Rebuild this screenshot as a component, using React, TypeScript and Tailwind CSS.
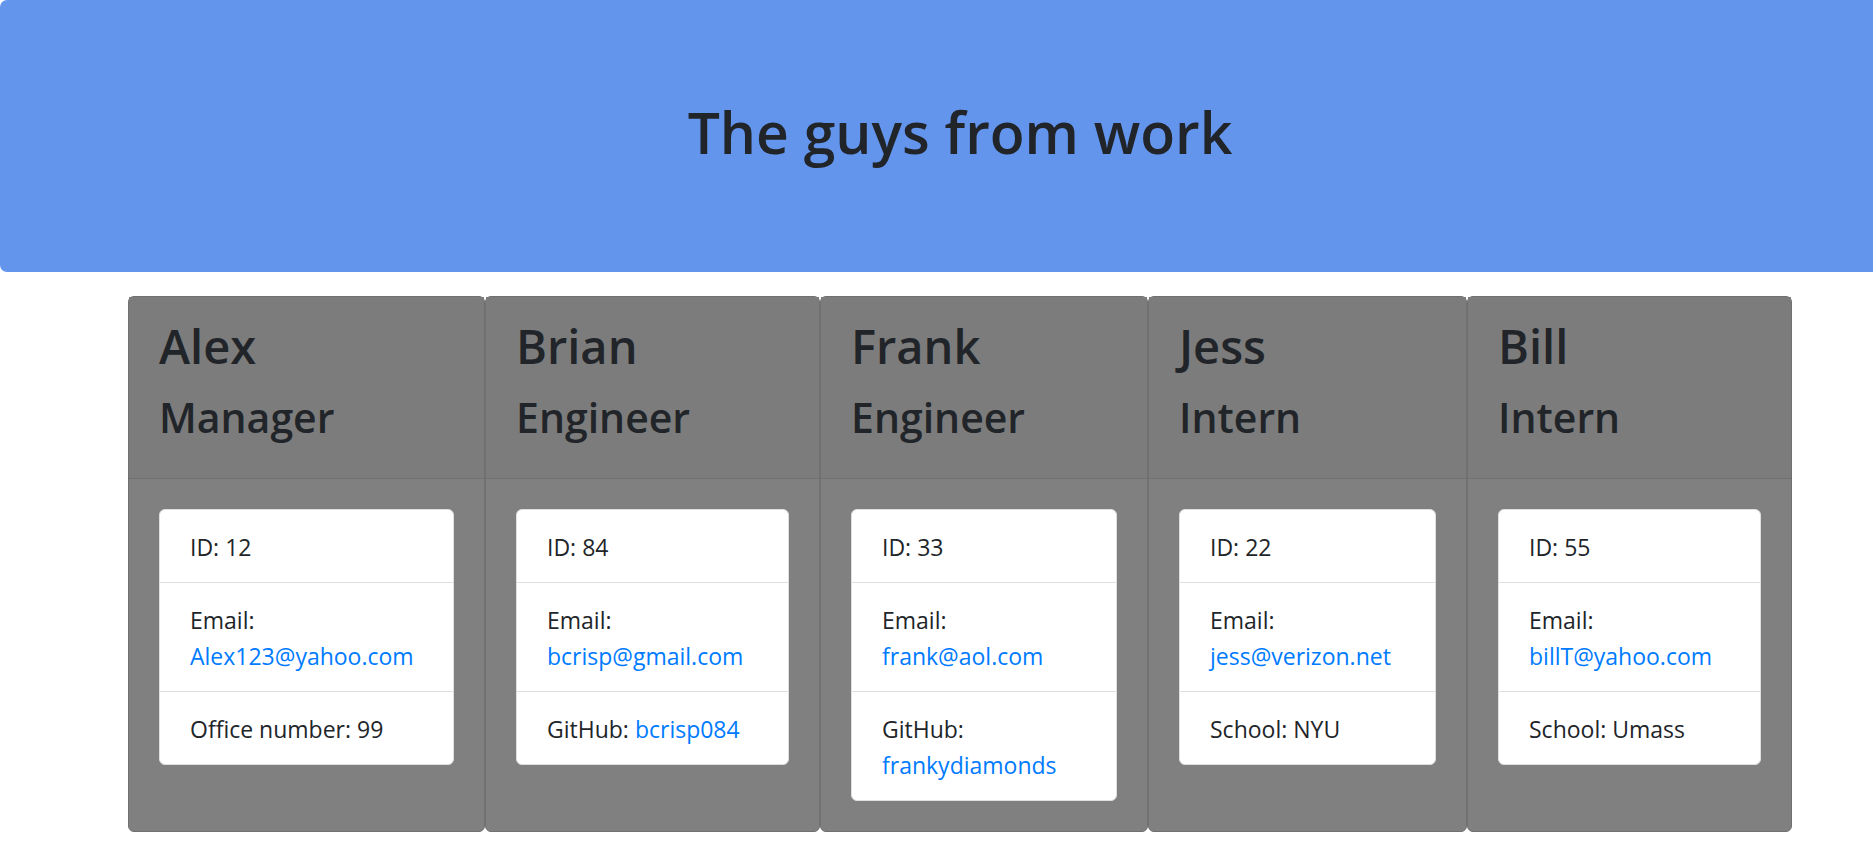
type Row = { label: string; value?: string; link?: boolean }

interface Employee {
  name: string
  role: string
  width: string
  rows: Row[]
}

const team: Employee[] = [
  {
    name: 'Alex',
    role: 'Manager',
    width: 'w-[357px]',
    rows: [
      { label: 'ID: 12' },
      { label: 'Email:', value: 'Alex123@yahoo.com', link: true },
      { label: 'Office number: 99' },
    ],
  },
  {
    name: 'Brian',
    role: 'Engineer',
    width: 'w-[335px]',
    rows: [
      { label: 'ID: 84' },
      { label: 'Email:', value: 'bcrisp@gmail.com', link: true },
      { label: 'GitHub:', value: 'bcrisp084', link: true },
    ],
  },
  {
    name: 'Frank',
    role: 'Engineer',
    width: 'w-[328px]',
    rows: [
      { label: 'ID: 33' },
      { label: 'Email:', value: 'frank@aol.com', link: true },
      { label: 'GitHub:', value: 'frankydiamonds', link: true },
    ],
  },
  {
    name: 'Jess',
    role: 'Intern',
    width: 'w-[319px]',
    rows: [
      { label: 'ID: 22' },
      { label: 'Email:', value: 'jess@verizon.net', link: true },
      { label: 'School: NYU' },
    ],
  },
  {
    name: 'Bill',
    role: 'Intern',
    width: 'w-[325px]',
    rows: [
      { label: 'ID: 55' },
      { label: 'Email:', value: 'billT@yahoo.com', link: true },
      { label: 'School: Umass' },
    ],
  },
]

function EmployeeCard({ person }: { person: Employee }) {
  return (
    <div className={`${person.width} flex flex-col rounded-[6px] border border-[#707070] bg-[#808080]`}>
      <div className="h-[182px] border-b border-[#707070] bg-[#7c7c7c] px-[30px] pt-[21px]">
        <h2 className="mb-[19px] text-[47px] font-semibold leading-[1.2]">{person.name}</h2>
        <h3 className="text-[41px] font-semibold leading-[1.2]">{person.role}</h3>
      </div>
      <div className="p-[30px]">
        <ul className="rounded-[6px] border border-[#dfdfdf] bg-white">
          {person.rows.map((row, i) => (
            <li
              key={row.label}
              className={`px-[30px] pt-[19px] pb-[17px] text-[23px] leading-[36px] ${i > 0 ? 'border-t border-[#dfdfdf]' : ''}`}
            >
              {row.label}
              {row.value && (
                <>
                  {' '}
                  <a href="#" className="text-[#007bff]">
                    {row.value}
                  </a>
                </>
              )}
            </li>
          ))}
        </ul>
      </div>
    </div>
  )
}

export default function App() {
  return (
    <div className="min-h-screen w-full overflow-hidden bg-white font-['Open_Sans',sans-serif] text-[#212529]">
      <div className="w-[1920px]">
        <div className="flex h-[272px] items-center justify-center rounded-[7px] bg-[#6495ed] pb-[8px]">
          <h1 className="text-[57px] font-semibold leading-[1.2]">The guys from work</h1>
        </div>
        <div className="mt-[24px] flex justify-center">
          {team.map((person) => (
            <EmployeeCard key={person.name} person={person} />
          ))}
        </div>
      </div>
    </div>
  )
}
